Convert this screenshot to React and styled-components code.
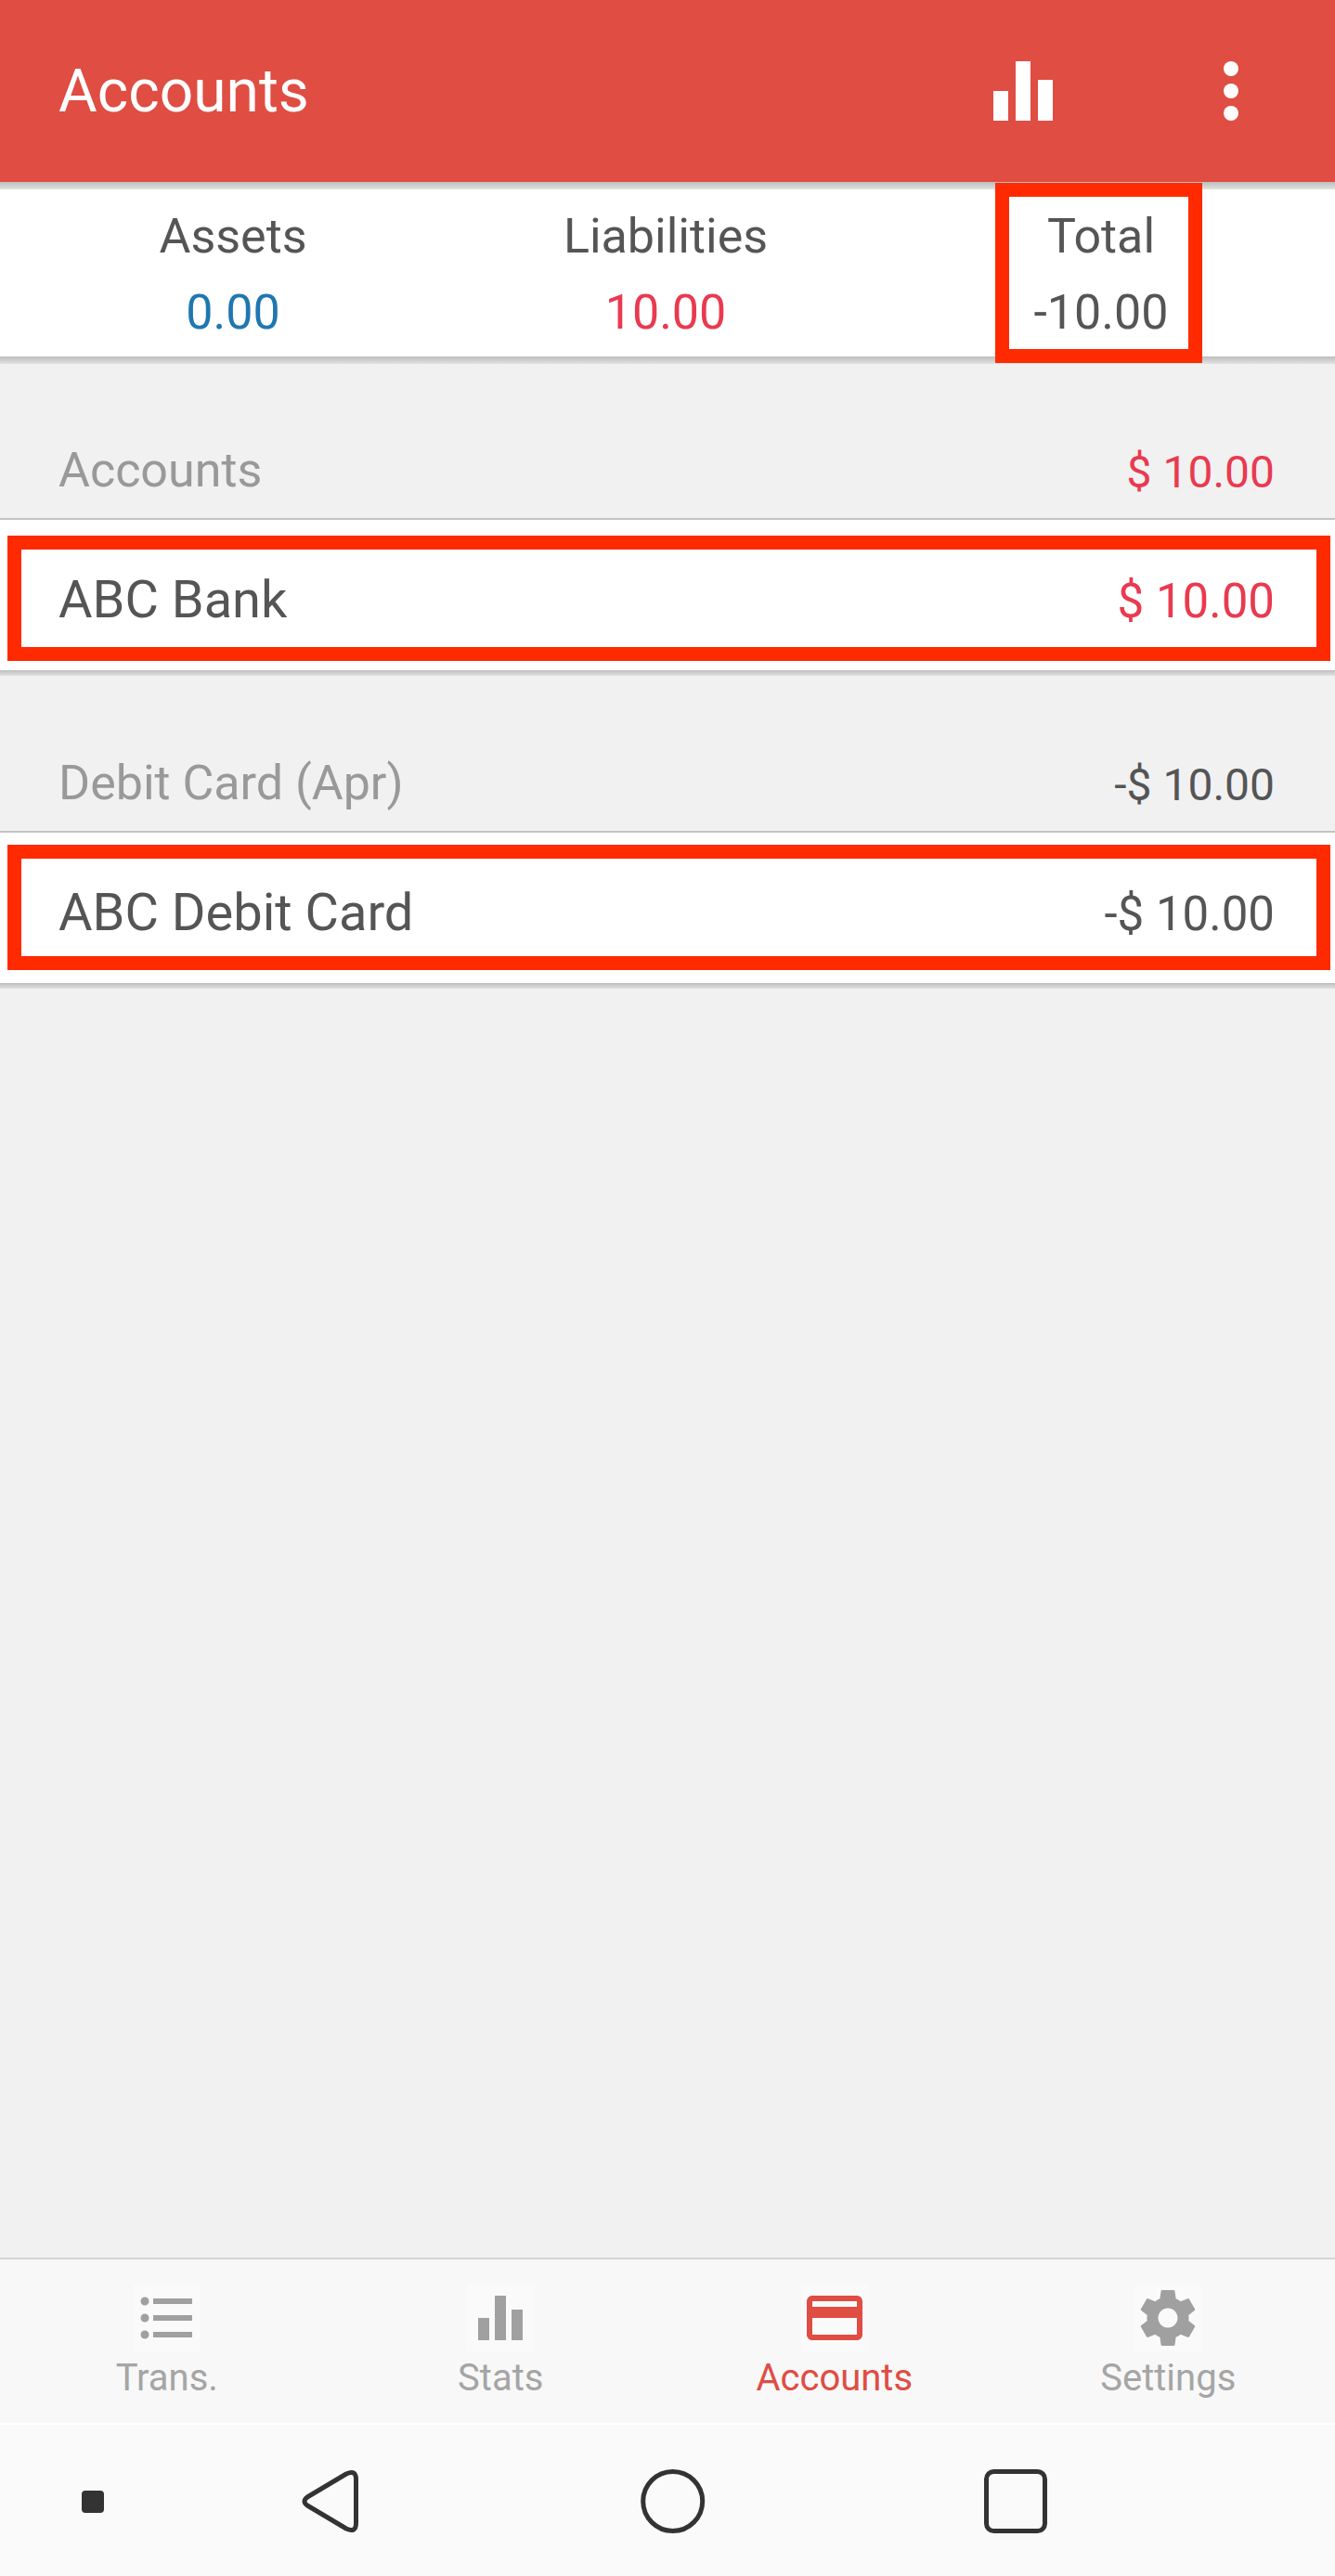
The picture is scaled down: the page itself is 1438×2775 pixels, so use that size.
import styled, { createGlobalStyle } from "styled-components";

const GlobalStyle = createGlobalStyle`
  html, body {
    margin: 0;
    padding: 0;
    background: #f1f1f1;
  }
  * {
    box-sizing: border-box;
  }
`;

const Screen = styled.div`
  width: 1438px;
  height: 2775px;
  display: flex;
  flex-direction: column;
  background: #f1f1f1;
  font-family: Roboto, "Liberation Sans", sans-serif;
  overflow: hidden;
`;

const AppBar = styled.header`
  height: 196px;
  flex: none;
  display: flex;
  align-items: center;
  padding: 0 64px 0 63px;
  background: #df4d43;
  color: #fff;
`;

const Title = styled.h1`
  margin: 2px auto 0 0;
  font-size: 64px;
  line-height: 80px;
  font-weight: 400;
`;

const BarActions = styled.div`
  display: flex;
  gap: 128px;
`;

const Shadow = styled.div`
  height: ${(props) => props.$height || 8}px;
  flex: none;
  background: linear-gradient(#bdbdbd, #e2e2e2);
`;

const Summary = styled.section`
  height: 180px;
  flex: none;
  display: grid;
  grid-template-columns: 466px 466px 472px;
  padding: 0 16px 0 18px;
  background: #fff;
`;

const SummaryCell = styled.div`
  position: relative;
  text-align: center;
  font-size: 52px;
  color: #555;
`;

const SummaryLabel = styled.div`
  line-height: 52px;
  margin-top: 25px;
`;

const SummaryValue = styled.div`
  line-height: 52px;
  margin-top: 30px;
  color: ${(props) => props.$color || "#555"};
`;

const TotalHighlight = styled.div`
  position: absolute;
  top: -7px;
  left: 122px;
  width: 223px;
  height: 194px;
  border: 15px solid #ff2a00;
`;

const SectionHead = styled.div`
  height: ${(props) => props.$height}px;
  flex: none;
  display: flex;
  justify-content: space-between;
  align-items: flex-end;
  padding: 0 65px 23px 63px;
  border-bottom: 2px solid #c4c4c4;
  font-size: 52px;
  line-height: 56px;
  color: #999;
`;

const HeadValue = styled.span`
  font-size: 48px;
  line-height: 52px;
  color: ${(props) => props.$color};
`;

const Row = styled.div`
  position: relative;
  height: 162px;
  flex: none;
  display: flex;
  justify-content: space-between;
  align-items: baseline;
  padding: 54px 65px 0 63px;
  background: #fff;
  font-size: 56px;
  line-height: 64px;
  color: #555;
`;

const RowValue = styled.span`
  font-size: 51px;
  color: ${(props) => props.$color};
`;

const RowHighlight = styled.div`
  position: absolute;
  top: ${(props) => props.$top}px;
  left: 8px;
  right: 5px;
  height: 135px;
  border: 15px solid #ff2a00;
`;

const Spacer = styled.div`
  flex: 1;
`;

const TabBar = styled.nav`
  height: 180px;
  flex: none;
  display: grid;
  grid-template-columns: repeat(4, 1fr);
  padding-top: 27px;
  border-top: 2px solid #d4d4d4;
  border-bottom: 2px solid #fff;
  background: #f8f8f8;
`;

const Tab = styled.div`
  display: flex;
  flex-direction: column;
  align-items: center;
  font-size: 40px;
  line-height: 50px;
  color: ${(props) => (props.$active ? "#df4d43" : "#a5a5a5")};
`;

const TabGlyph = styled.svg`
  width: 72px;
  height: 72px;
  display: block;
  background: #fafafa;
  fill: currentColor;
  color: ${(props) => (props.$active ? "#df4d43" : "#a0a0a0")};
`;

const TabText = styled.span`
  margin-top: 4px;
`;

const NavBar = styled.div`
  flex: none;
  height: 163px;
  display: flex;
  align-items: center;
  padding: 3px 0 0 88px;
  background: #fafafa;
`;

const RecentDot = styled.div`
  width: 24px;
  height: 24px;
  margin-right: 213px;
  border-radius: 4px;
  background: #333;
`;

const NavGlyph = styled.svg`
  width: 70px;
  height: 70px;
  display: block;
  margin-right: ${(props) => props.$gap}px;
  fill: none;
  stroke: #333;
  stroke-width: 5px;
  stroke-linejoin: round;
`;

const RED = "#e93a50";

const BarChart = "M4 12h4v8H4zM10 4h4v16h-4zM16 9h4v11h-4z";
const ListBullets =
  "M7 5h14v2H7zM7 11h14v2H7zM7 17h14v2H7zM4 4.5a1.5 1.5 0 1 1 0 3 1.5 1.5 0 0 1 0-3zM4 10.5a1.5 1.5 0 1 1 0 3 1.5 1.5 0 0 1 0-3zM4 16.5a1.5 1.5 0 1 1 0 3 1.5 1.5 0 0 1 0-3z";
const CreditCard =
  "M20 4H4c-1.11 0-1.99.89-1.99 2L2 18c0 1.11.89 2 2 2h16c1.11 0 2-.89 2-2V6c0-1.11-.89-2-2-2zm0 14H4v-6h16v6zm0-10H4V6h16v2z";
const Gear =
  "M19.43 12.98c.04-.32.07-.64.07-.98s-.03-.66-.07-.98l2.11-1.65c.19-.15.24-.42.12-.64l-2-3.46c-.12-.22-.39-.3-.61-.22l-2.49 1c-.52-.4-1.08-.73-1.69-.98l-.38-2.65C14.46 2.18 14.25 2 14 2h-4c-.25 0-.46.18-.49.42l-.38 2.65c-.61.25-1.17.59-1.69.98l-2.49-1c-.23-.09-.49 0-.61.22l-2 3.46c-.13.22-.07.49.12.64l2.11 1.65c-.04.32-.07.65-.07.98s.03.66.07.98l-2.11 1.65c-.19.15-.24.42-.12.64l2 3.46c.12.22.39.3.61.22l2.49-1c.52.4 1.08.73 1.69.98l.38 2.65c.03.24.24.42.49.42h4c.25 0 .46-.18.49-.42l.38-2.65c.61-.25 1.17-.59 1.69-.98l2.49 1c.23.09.49 0 .61-.22l2-3.46c.12-.22.07-.49-.12-.64l-2.11-1.65zM12 15.5c-1.93 0-3.5-1.57-3.5-3.5s1.57-3.5 3.5-3.5 3.5 1.57 3.5 3.5-1.57 3.5-3.5 3.5z";

const tabs = [
  { label: "Trans.", path: ListBullets },
  { label: "Stats", path: BarChart },
  { label: "Accounts", path: CreditCard, active: true },
  { label: "Settings", path: Gear },
];

const App = () => {
  return (
    <Screen>
      <GlobalStyle />
      <AppBar>
        <Title>Accounts</Title>
        <BarActions>
          <svg width="96" height="96" viewBox="0 0 24 24" fill="#fff">
            <path d={BarChart} />
          </svg>
          <svg width="96" height="96" viewBox="0 0 24 24" fill="#fff">
            <circle cx="12" cy="6" r="2" />
            <circle cx="12" cy="12" r="2" />
            <circle cx="12" cy="18" r="2" />
          </svg>
        </BarActions>
      </AppBar>
      <Shadow />
      <Summary>
        <SummaryCell>
          <SummaryLabel>Assets</SummaryLabel>
          <SummaryValue $color="#1f77b0">0.00</SummaryValue>
        </SummaryCell>
        <SummaryCell>
          <SummaryLabel>Liabilities</SummaryLabel>
          <SummaryValue $color={RED}>10.00</SummaryValue>
        </SummaryCell>
        <SummaryCell>
          <SummaryLabel>Total</SummaryLabel>
          <SummaryValue>-10.00</SummaryValue>
          <TotalHighlight />
        </SummaryCell>
      </Summary>
      <Shadow />
      <SectionHead $height={168}>
        <span>Accounts</span>
        <HeadValue $color={RED}>$ 10.00</HeadValue>
      </SectionHead>
      <Row>
        <span>ABC Bank</span>
        <RowValue $color={RED}>$ 10.00</RowValue>
        <RowHighlight $top={17} />
      </Row>
      <Shadow $height={6} />
      <SectionHead $height={169}>
        <span>Debit Card (Apr)</span>
        <HeadValue $color="#555">-$ 10.00</HeadValue>
      </SectionHead>
      <Row>
        <span>ABC Debit Card</span>
        <RowValue $color="#555">-$ 10.00</RowValue>
        <RowHighlight $top={13} />
      </Row>
      <Shadow $height={6} />
      <Spacer />
      <TabBar>
        {tabs.map((tab) => (
          <Tab key={tab.label} $active={tab.active}>
            <TabGlyph viewBox="0 0 24 24" $active={tab.active}>
              <path d={tab.path} />
            </TabGlyph>
            <TabText>{tab.label}</TabText>
          </Tab>
        ))}
      </TabBar>
      <NavBar>
        <RecentDot />
        <NavGlyph viewBox="0 0 70 70" $gap={295}>
          <path d="M48 5 L6 30 Q0 34.5 6 39 L48 64 Q58.5 69 58.5 58 V11 Q58.5 0 48 5 Z" />
        </NavGlyph>
        <NavGlyph viewBox="0 0 70 70" $gap={300}>
          <circle cx="34.7" cy="34.5" r="32" />
        </NavGlyph>
        <NavGlyph viewBox="0 0 70 70" $gap={0}>
          <rect x="2.5" y="2.5" width="63" height="64" rx="8" />
        </NavGlyph>
      </NavBar>
    </Screen>
  );
};

export default App;
